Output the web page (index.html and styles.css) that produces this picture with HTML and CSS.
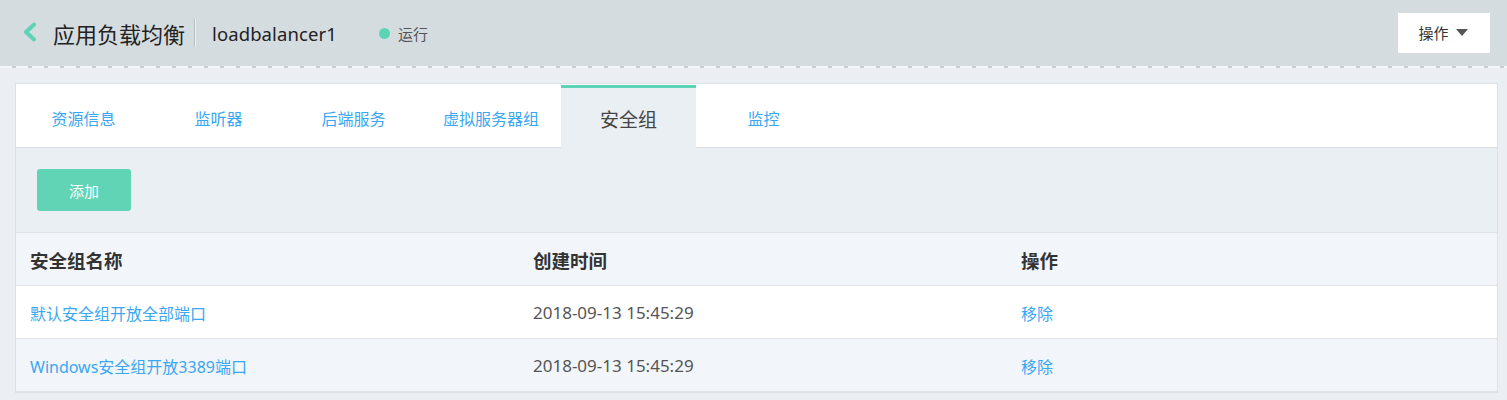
FILE: index.html
```html
<!DOCTYPE html>
<html lang="zh-CN">
<head>
<meta charset="utf-8">
<title>应用负载均衡</title>
<link rel="stylesheet" href="styles.css">
</head>
<body>
<header class="topbar">
  <a class="back" href="#" aria-label="返回">
    <svg width="16" height="20" viewBox="0 0 16 20"><path d="M12 2.5 L4 10 L12 17.5" fill="none" stroke="#5dd3b5" stroke-width="4" stroke-linecap="round" stroke-linejoin="round"/></svg>
  </a>
  <h1 class="title">应用负载均衡</h1>
  <span class="divider"></span>
  <span class="name">loadbalancer1</span>
  <span class="status"><i class="dot"></i>运行</span>
  <span class="spacer"></span>
  <button class="op-btn">操作<i class="caret"></i></button>
</header>

<main class="card">
  <nav class="tabs">
    <a class="tab" href="#">资源信息</a>
    <a class="tab" href="#">监听器</a>
    <a class="tab" href="#">后端服务</a>
    <a class="tab" href="#">虚拟服务器组</a>
    <a class="tab active" href="#">安全组</a>
    <a class="tab" href="#">监控</a>
  </nav>
  <section class="panel">
    <button class="add-btn">添加</button>
  </section>
  <table class="grid">
    <thead>
      <tr><th class="c1">安全组名称</th><th class="c2">创建时间</th><th>操作</th></tr>
    </thead>
    <tbody>
      <tr><td><a href="#">默认安全组开放全部端口</a></td><td class="time">2018-09-13 15:45:29</td><td><a href="#">移除</a></td></tr>
      <tr class="alt"><td><a href="#">Windows安全组开放3389端口</a></td><td class="time">2018-09-13 15:45:29</td><td><a href="#">移除</a></td></tr>
    </tbody>
  </table>
</main>
</body>
</html>
```

FILE: styles.css
```css
* { box-sizing: border-box; }
html, body { margin: 0; padding: 0; }
body {
  background: #ebeff3;
  font-family: "Noto Sans", "Noto Sans CJK SC", sans-serif;
  color: #333;
  width: 1507px;
  height: 400px;
  overflow: hidden;
}
a { text-decoration: none; }

.topbar {
  height: 66px;
  background: #d5dce0;
  display: flex;
  align-items: center;
  padding: 0 17px 0 22px;
  position: relative;
}
.topbar::after {
  content: "";
  position: absolute;
  left: 0; right: 0; bottom: -2px;
  height: 2px;
  background: repeating-linear-gradient(90deg, #f4f6f8 0 12px, #c9d1d7 12px 16px);
}
.back { display: flex; width: 16px; height: 20px; margin-top: -2px; }
.title {
  margin: 0 0 0 15px;
  font-size: 22px;
  font-weight: 400;
  color: #222;
  line-height: 1;
  font-family: "Noto Sans CJK SC", sans-serif;
}
.divider {
  width: 1px;
  height: 28px;
  background: #b8c0c6;
  margin: 0 17px 0 9px;
  box-shadow: 1px 0 0 #eef1f3;
}
.name { font-size: 18.5px; color: #222; letter-spacing: 0.1px; }
.status {
  display: flex;
  align-items: center;
  margin-left: 42px;
  font-size: 15px;
  color: #555;
  font-family: "Noto Sans CJK SC", sans-serif;
}
.dot {
  width: 11px; height: 11px;
  border-radius: 50%;
  background: #5dd3b5;
  margin-right: 8px;
}
.spacer { flex: 1; }
.op-btn {
  width: 92px;
  height: 40px;
  background: #fff;
  border: none;
  font-family: "Noto Sans CJK SC", sans-serif;
  font-size: 15px;
  color: #333;
  display: flex;
  align-items: center;
  justify-content: center;
  padding: 0 2px 0 0;
  margin-top: -1px;
}
.caret {
  width: 0; height: 0;
  border-left: 6.5px solid transparent;
  border-right: 6.5px solid transparent;
  border-top: 7px solid #555;
  margin-left: 7px;
}

.card {
  margin: 17px 9px 0 15px;
  border: 1px solid #dbe1e6;
  background: #eaeff3;
}
.tabs {
  display: flex;
  background: #fff;
  height: 64px;
  border-bottom: 1px solid #d7dde2;
}
.tab {
  min-width: 135px;
  padding: 0 22px;
  display: flex;
  align-items: center;
  justify-content: center;
  font-family: "Noto Sans CJK SC", sans-serif;
  font-size: 16px;
  color: #3aa7f2;
  padding-top: 4px;
}
.tab.active {
  background: #eaeff3;
  border-top: 3px solid #5dd3b5;
  margin-top: 1px;
  margin-bottom: -1px;
  font-size: 19px;
  color: #444;
  padding-top: 1px;
}
.panel { padding: 21px 21px 21px 21px; }
.add-btn {
  width: 94px;
  height: 42px;
  border: none;
  border-radius: 3px;
  background: #60d4b5;
  color: #fff;
  font-family: "Noto Sans CJK SC", sans-serif;
  font-size: 15px;
  display: block;
}

.grid {
  width: 100%;
  border-collapse: collapse;
  table-layout: fixed;
}
.grid th, .grid td {
  height: 53px;
  padding: 0 14px;
  text-align: left;
  border-top: 1px solid #dde3e9;
  border-bottom: 1px solid #dde3e9;
}
.grid th {
  background: #f2f5f9;
  font-family: "Noto Sans CJK SC", sans-serif;
  font-size: 18.5px;
  font-weight: 700;
  color: #333;
  padding-top: 2px;
}
.grid .c1 { width: 503px; }
.grid .c2 { width: 488px; }
.grid td {
  background: #fff;
  font-size: 16px;
  font-family: "Noto Sans", "Noto Sans CJK SC", sans-serif;
  padding-top: 1px;
}
.grid tr.alt td { background: #f2f5f9; }
.grid td a { color: #3aa7f2; }
.grid td.time { color: #555; font-size: 17px; }
```
